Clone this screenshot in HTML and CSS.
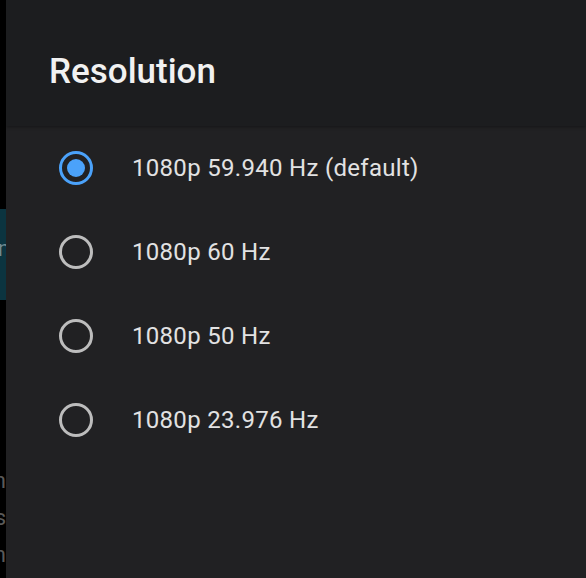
FILE: index.html
```html
<!DOCTYPE html>
<html lang="en">
<head>
    <meta charset="UTF-8">
    <meta name="viewport" content="width=device-width, initial-scale=1.0">
    <title>Resolution</title>
    <link rel="stylesheet" href="styles.css">
</head>
<body>
    <div class="screen">
        <!-- Rest des Hintergrunds links neben dem Dialog -->
        <div class="behind">
            <div class="behind-inner">
                <div class="behind-card">Resolutione</div>
                <div class="behind-text">Main</div>
                <div class="behind-text">Settings</div>
                <div class="behind-text">Screen</div>
            </div>
        </div>

        <div class="dialog">
            <div class="dialog-header">
                <h1>Resolution</h1>
            </div>
            <ul class="options">
                <li class="option checked">
                    <span class="radio"></span>
                    <span class="label">1080p 59.940 Hz (default)</span>
                </li>
                <li class="option">
                    <span class="radio"></span>
                    <span class="label">1080p 60 Hz</span>
                </li>
                <li class="option">
                    <span class="radio"></span>
                    <span class="label">1080p 50 Hz</span>
                </li>
                <li class="option">
                    <span class="radio"></span>
                    <span class="label">1080p 23.976 Hz</span>
                </li>
            </ul>
        </div>
    </div>
</body>
</html>
```

FILE: styles.css
```css
html, body {
    margin: 0;
    padding: 0;
    height: 100%;
    background-color: #000;
    font-family: Roboto, "Noto Sans", sans-serif;
}
.screen {
    display: flex;
    height: 578px;
    overflow: hidden;
}
.behind {
    width: 6px;
    flex-shrink: 0;
    overflow: hidden;
    background-color: #000;
}
.behind-inner {
    width: 100px;
    margin-left: -94px;
    text-align: right;
    color: #5a5a5a;
    font-size: 22px;
}
.behind-card {
    margin-top: 209px;
    height: 91px;
    line-height: 80px;
    background-color: #0b3440;
    color: #6f8a92;
    margin-bottom: 162px;
}
.behind-text {
    height: 37px;
    line-height: 37px;
}
.dialog {
    flex: 1;
    background-color: #212123;
}
.dialog-header {
    height: 126px;
    box-sizing: border-box;
    background-color: #1c1d1f;
    box-shadow: 0 1px 3px rgba(0, 0, 0, 0.35);
    padding: 51px 0 0 43px;
    position: relative;
}
.dialog-header h1 {
    margin: 0;
    font-size: 35px;
    font-weight: 500;
    color: #f1f1f1;
}
.options {
    list-style: none;
    margin: 0;
    padding: 0;
}
.option {
    height: 84px;
    display: flex;
    align-items: center;
    padding-left: 53px;
}
.radio {
    width: 28px;
    height: 28px;
    border: 3px solid #bdbdbd;
    border-radius: 50%;
    position: relative;
    flex-shrink: 0;
}
.option.checked .radio {
    border-color: #4ba2fa;
}
.option.checked .radio::after {
    content: "";
    position: absolute;
    left: 5px;
    top: 5px;
    width: 18px;
    height: 18px;
    border-radius: 50%;
    background-color: #4ba2fa;
}
.label {
    margin-left: 39px;
    font-size: 24px;
    color: #e2e2e2;
    letter-spacing: 0.3px;
}
```
